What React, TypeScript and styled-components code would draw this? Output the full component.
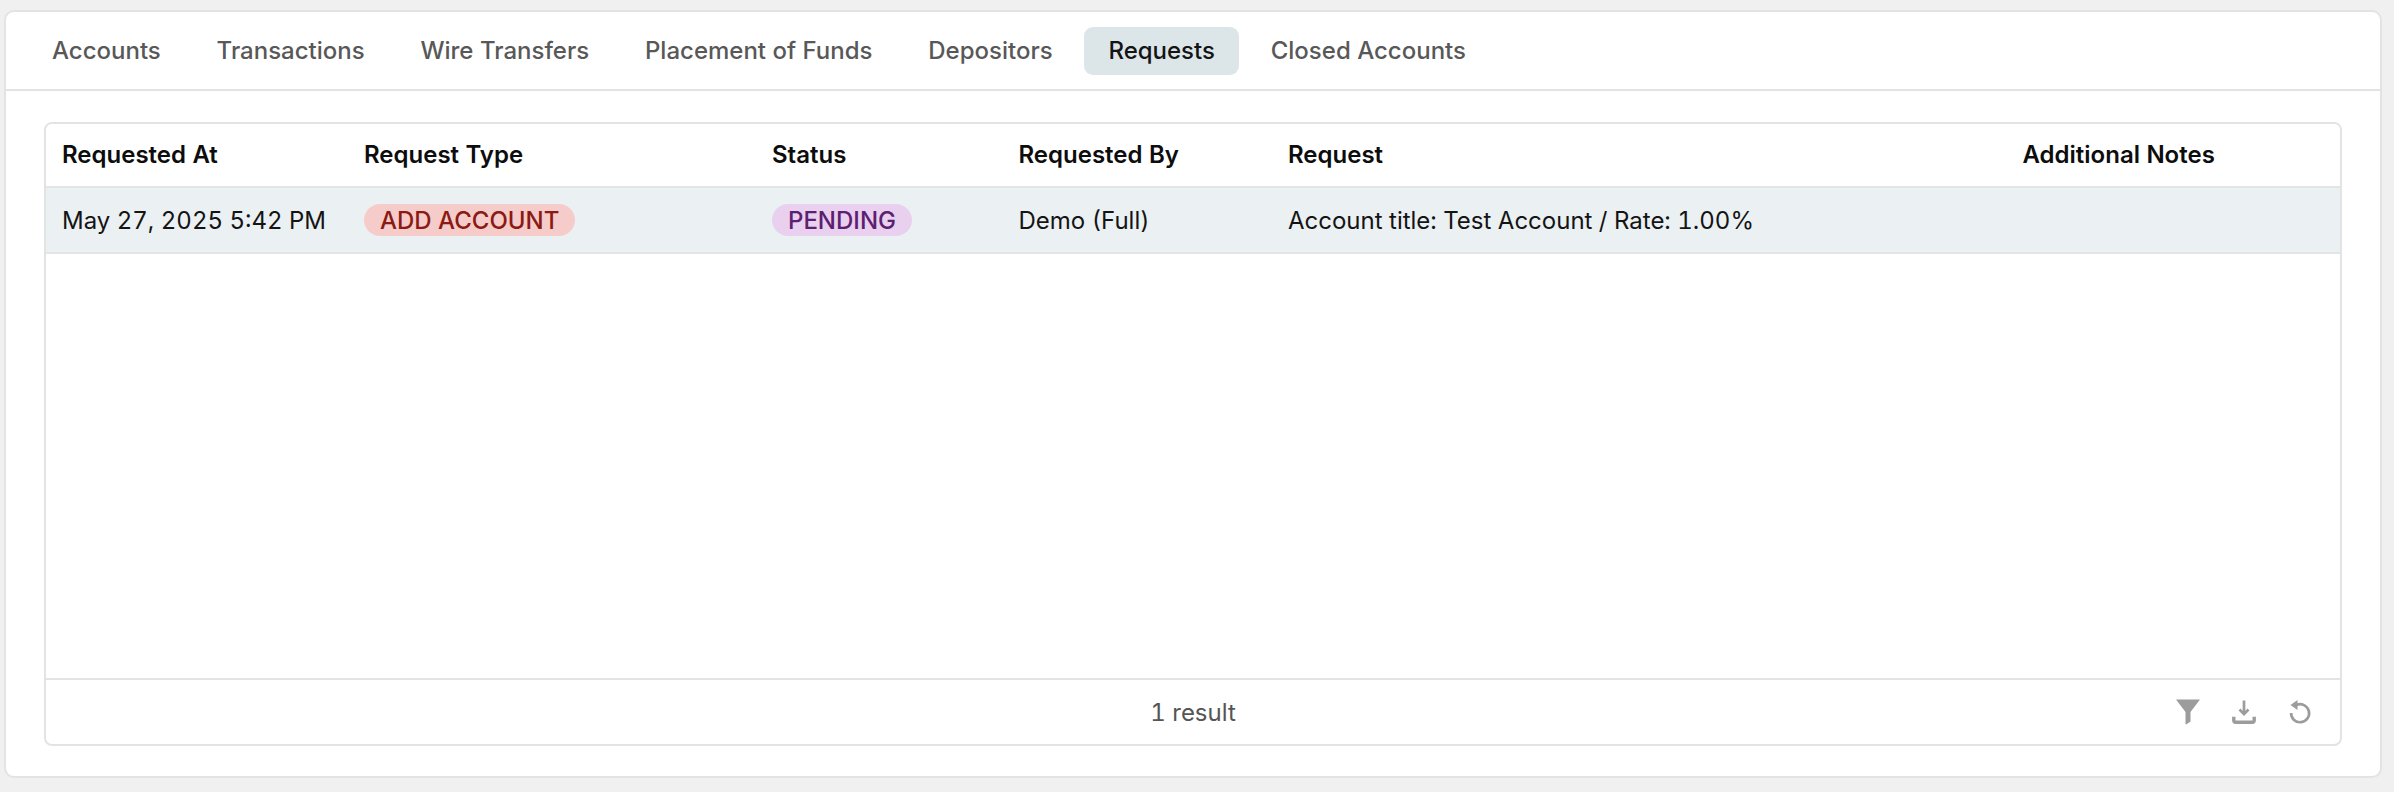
import React from "react";
import styled, { createGlobalStyle } from "styled-components";

const Global = createGlobalStyle`
  html, body { margin: 0; padding: 0; background: #f0f0f0; }
  body { font-family: Inter, "Liberation Sans", sans-serif; font-size: 24px; font-variant-numeric: tabular-nums; -webkit-font-smoothing: antialiased; }
`;

const Page = styled.div`
  box-sizing: border-box;
  width: 2394px;
  height: 792px;
  padding: 10px 12px 14px 4px;
  display: flex;
`;

const Card = styled.main`
  flex: 1;
  display: flex;
  flex-direction: column;
  background: #fff;
  border: 2px solid #e3e3e3;
  border-radius: 10px;
  overflow: hidden;
`;

const TabBar = styled.nav`
  display: flex;
  align-items: center;
  gap: 7.8px;
  height: 79px;
  flex: none;
  box-sizing: border-box;
  padding: 0 0 0 22px;
  border-bottom: 2px solid #e3e3e3;
`;

const Tab = styled.div<{ $active?: boolean }>`
  height: 48px;
  display: flex;
  align-items: center;
  padding: 0 24px;
  border-radius: 9px;
  font-weight: 500;
  color: ${(p) => (p.$active ? "#141414" : "#585858")};
  background: ${(p) => (p.$active ? "#dce6e8" : "transparent")};
`;

const Content = styled.section`
  flex: 1;
  display: flex;
  padding: 31px 38px 30px 38px;
  min-height: 0;
`;

const TableBox = styled.div`
  flex: 1;
  display: flex;
  flex-direction: column;
  border: 2px solid #e3e3e3;
  border-radius: 8px;
  overflow: hidden;
`;

const Row = styled.div<{ $head?: boolean }>`
  display: grid;
  grid-template-columns: 302px 408px 246.5px 269.5px 734.5px 1fr;
  align-items: center;
  flex: none;
  box-sizing: border-box;
  height: ${(p) => (p.$head ? "64px" : "66px")};
  padding-bottom: ${(p) => (p.$head ? "2px" : "0")};
  border-bottom: 2px solid #e2e5e5;
  background: ${(p) => (p.$head ? "#fff" : "#ebf0f3")};
  color: ${(p) => (p.$head ? "#0d0d0d" : "#141414")};
  font-weight: ${(p) => (p.$head ? 600 : 400)};
`;

const Cell = styled.div`
  padding-left: 16px;
  white-space: nowrap;
`;

const Badge = styled.span<{ $bg: string; $fg: string }>`
  display: inline-flex;
  align-items: center;
  height: 32px;
  padding: 0 16px;
  border-radius: 16px;
  font-weight: 500;
  background: ${(p) => p.$bg};
  color: ${(p) => p.$fg};
`;

const Spacer = styled.div`
  flex: 1;
`;

const Footer = styled.footer`
  position: relative;
  flex: none;
  height: 66px;
  box-sizing: border-box;
  display: flex;
  align-items: center;
  justify-content: center;
  border-top: 2px solid #e3e3e3;
  color: #555;
`;

const Tools = styled.div`
  position: absolute;
  right: 27px;
  top: 50%;
  transform: translateY(-50%);
  display: flex;
  align-items: center;
  gap: 30px;
`;

const Icon = styled.svg`
  width: 26px;
  height: 26px;
  display: block;
  color: #9c9c9c;
`;

const tabs = ["Accounts", "Transactions", "Wire Transfers", "Placement of Funds", "Depositors", "Requests", "Closed Accounts"];
const heads = ["Requested At", "Request Type", "Status", "Requested By", "Request", "Additional Notes"];

export default function App() {
  return (
    <Page>
      <Global />
      <Card>
        <TabBar>
          {tabs.map((t) => (
            <Tab key={t} $active={t === "Requests"}>{t}</Tab>
          ))}
        </TabBar>
        <Content>
          <TableBox>
            <Row $head>
              {heads.map((h) => (
                <Cell key={h}>{h}</Cell>
              ))}
            </Row>
            <Row>
              <Cell>May 27, 2025 5:42 PM</Cell>
              <Cell><Badge $bg="#f6cccb" $fg="#8a1a12">ADD ACCOUNT</Badge></Cell>
              <Cell><Badge $bg="#e9d0ef" $fg="#5c2070">PENDING</Badge></Cell>
              <Cell>Demo (Full)</Cell>
              <Cell>Account title: Test Account / Rate: 1.00%</Cell>
              <Cell />
            </Row>
            <Spacer />
            <Footer>
              1 result
              <Tools>
                <Icon viewBox="0 0 26 26">
                  <path d="M1 0.5h24L15.5 13v9.5L11.5 25.2a.6.6 0 0 1-1-.5V13z" fill="currentColor" />
                </Icon>
                <Icon viewBox="0 0 26 26" fill="none" stroke="currentColor">
                  <path d="M13 1.5V15" strokeWidth="2.7" />
                  <path d="M8.5 10.5L13 15l4.5-4.5" strokeWidth="2.7" />
                  <path d="M2.8 17.8v3.4a2 2 0 0 0 2 2h16.4a2 2 0 0 0 2-2v-3.4" strokeWidth="3.4" />
                </Icon>
                <Icon viewBox="0 0 26 26" fill="none" stroke="currentColor">
                  <path d="M9.5 6a9 9 0 1 1-5.4 8" strokeWidth="2.7" />
                  <path d="M10.5 1L3.5 6l7 5z" fill="currentColor" stroke="none" />
                </Icon>
              </Tools>
            </Footer>
          </TableBox>
        </Content>
      </Card>
    </Page>
  );
}
